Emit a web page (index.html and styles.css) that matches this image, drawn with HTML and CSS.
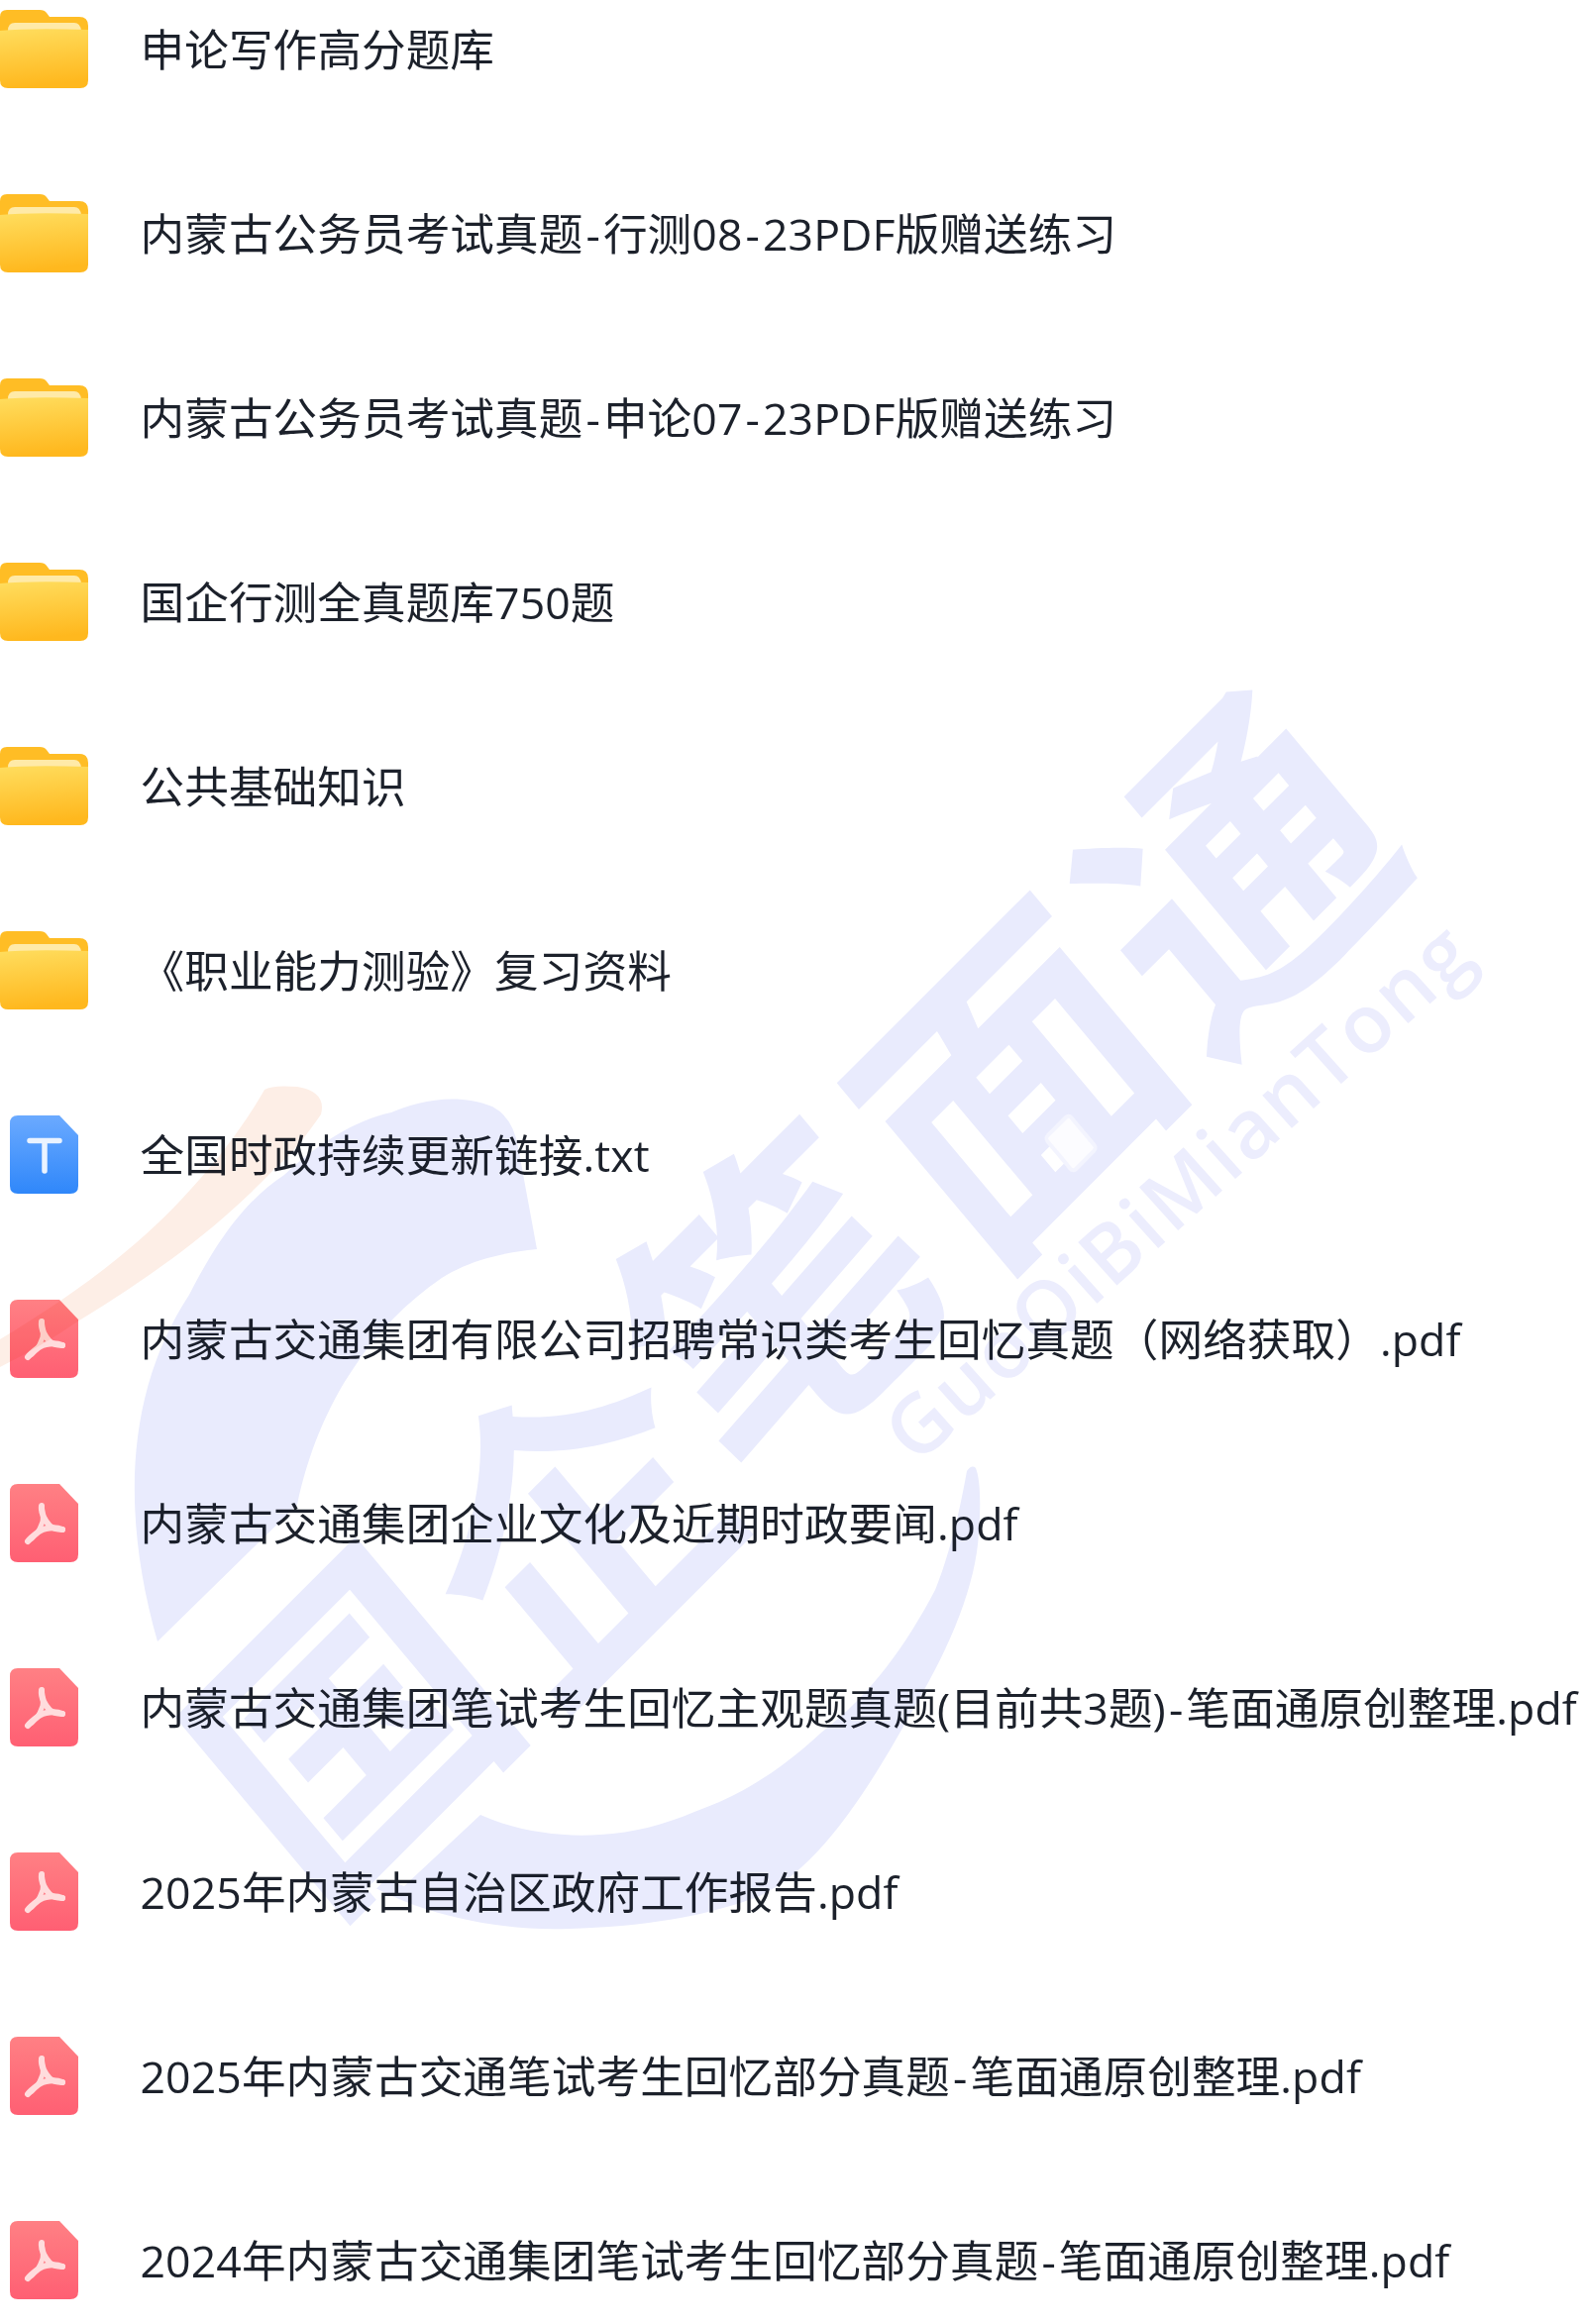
FILE: index.html
```html
<!DOCTYPE html>
<html lang="zh-CN">
<head>
<meta charset="utf-8">
<title>文件列表</title>
<link rel="stylesheet" href="styles.css">
</head>
<body>
<svg width="0" height="0" class="defs">
  <defs>
    <linearGradient id="gf" x1="0" y1="0" x2="0.15" y2="1"><stop offset="0" stop-color="#ffdd5e"/><stop offset="1" stop-color="#ffb81e"/></linearGradient>
    <linearGradient id="gb" x1="0" y1="0" x2="0" y2="1"><stop offset="0" stop-color="#6baaff"/><stop offset="1" stop-color="#2f87fa"/></linearGradient>
    <linearGradient id="gr" x1="0" y1="0" x2="0" y2="1"><stop offset="0" stop-color="#ff8084"/><stop offset="1" stop-color="#ff5f73"/></linearGradient>
    <symbol id="folder" viewBox="0 0 90 80">
      <path d="M0 7Q0 0 7 0H40Q45 0 47 3L50 7H80Q89 7 89 16V40H0Z" fill="#ffbd25"/>
      <path d="M8 21Q8 13 15 13H75Q81 13 82 21V32H8Z" fill="#ffeaa8"/>
      <path d="M0 21Q30 18 89 20V71Q89 79 81 79H8Q0 79 0 71Z" fill="url(#gf)"/>
    </symbol>
    <symbol id="txt" viewBox="0 0 69 79">
      <path d="M8 0H50L69 20V71Q69 79 61 79H8Q0 79 0 71V8Q0 0 8 0Z" fill="url(#gb)"/>
      <path d="M20 25.500H50M35 25.500V56" fill="none" stroke="#eaf3ff" stroke-width="5.500" stroke-linecap="round"/>
    </symbol>
    <symbol id="pdf" viewBox="0 0 69 79">
      <path d="M8 0H50L69 20V71Q69 79 61 79H8Q0 79 0 71V8Q0 0 8 0Z" fill="url(#gr)"/>
      <g fill="none" stroke="#ffdcdd" stroke-linecap="round" stroke-linejoin="round">
        <path d="M32 22C31 30 36 38 40 42C44 46 49 46 53 46" stroke-width="6"/>
        <path d="M53 46C46 43 34 44 28 49C24 52 20 55 18 58" stroke-width="6"/>
        <path d="M18 58C24 55 30 47 33 38C34 32 33 27 32 22" stroke-width="5"/>
      </g>
    </symbol>
  </defs>
</svg>

<ul class="files">
  <li class="file"><svg class="ic-folder"><use href="#folder"/></svg><span class="name">申论写作高分题库</span></li>
  <li class="file"><svg class="ic-folder"><use href="#folder"/></svg><span class="name">内蒙古公务员考试真题<span class="hy">-</span>行测08<span class="hy">-</span>23PDF版赠送练习</span></li>
  <li class="file"><svg class="ic-folder"><use href="#folder"/></svg><span class="name">内蒙古公务员考试真题<span class="hy">-</span>申论07<span class="hy">-</span>23PDF版赠送练习</span></li>
  <li class="file"><svg class="ic-folder"><use href="#folder"/></svg><span class="name">国企行测全真题库750题</span></li>
  <li class="file"><svg class="ic-folder"><use href="#folder"/></svg><span class="name">公共基础知识</span></li>
  <li class="file"><svg class="ic-folder"><use href="#folder"/></svg><span class="name">《职业能力测验》复习资料</span></li>
  <li class="file"><svg class="ic-doc"><use href="#txt"/></svg><span class="name">全国时政持续更新链接.txt</span></li>
  <li class="file"><svg class="ic-doc"><use href="#pdf"/></svg><span class="name">内蒙古交通集团有限公司招聘常识类考生回忆真题（网络获取）.pdf</span></li>
  <li class="file"><svg class="ic-doc"><use href="#pdf"/></svg><span class="name">内蒙古交通集团企业文化及近期时政要闻.pdf</span></li>
  <li class="file"><svg class="ic-doc"><use href="#pdf"/></svg><span class="name">内蒙古交通集团笔试考生回忆主观题真题(目前共3题)<span class="hy">-</span>笔面通原创整理.pdf</span></li>
  <li class="file"><svg class="ic-doc"><use href="#pdf"/></svg><span class="name">2025年内蒙古自治区政府工作报告.pdf</span></li>
  <li class="file"><svg class="ic-doc"><use href="#pdf"/></svg><span class="name">2025年内蒙古交通笔试考生回忆部分真题<span class="hy">-</span>笔面通原创整理.pdf</span></li>
  <li class="file"><svg class="ic-doc"><use href="#pdf"/></svg><span class="name">2024年内蒙古交通集团笔试考生回忆部分真题<span class="hy">-</span>笔面通原创整理.pdf</span></li>
</ul>

<svg class="watermark" viewBox="0 0 1600 2346" aria-hidden="true">
  <path class="wm-orange" d="M0 1352C70 1310 140 1260 193 1200C225 1165 250 1130 267 1100Q275 1095 300 1097Q330 1102 324 1125C310 1145 295 1165 277 1180C215 1245 150 1290 80 1333C55 1350 30 1365 0 1380Z"/>
  <path class="wm-blue" d="M159 1657C120 1520 130 1400 191 1307C220 1250 250 1210 287 1186C320 1155 360 1130 395 1123C420 1112 460 1102 497 1117Q518 1128 523 1158L542 1261C500 1265 470 1275 446 1290C410 1315 380 1345 357 1381C330 1420 310 1470 300 1519Z"/>
  <path class="wm-blue" d="M485 1832L408 1904L340 1880C400 1930 500 1950 574 1947C650 1945 710 1935 765 1915C830 1885 880 1800 925 1720C960 1660 985 1600 988 1548C990 1520 990 1495 985 1482Q981 1478 976 1485C968 1530 958 1570 944 1605C915 1660 880 1710 829 1749C790 1785 750 1812 701 1829C670 1842 640 1850 606 1852C565 1855 520 1848 485 1832Z"/>
  <g class="wm-logo">
    <text transform="translate(342 1730) rotate(-45) skewX(-5)">国</text>
    <text transform="translate(570 1525) rotate(-45) skewX(-5)">企</text>
    <text transform="translate(775 1300) rotate(-45) skewX(-5)">笔</text>
    <text transform="translate(1012 1080) rotate(-45) skewX(-5)">面</text>
    <text transform="translate(1238 866) rotate(-45) skewX(-5)">通</text>
  </g>
  <rect class="wm-diamond" x="-17" y="-22" width="34" height="44" rx="4" transform="translate(1081 1154) rotate(-45) skewX(-5)"/>
  <text class="wm-latin" transform="translate(925 1480) rotate(-42)" textLength="762">GuoQiBiMianTong</text>
</svg>
</body>
</html>
```

FILE: styles.css
```css
html, body {
  margin: 0;
  padding: 0;
  background: #ffffff;
}

body {
  position: relative;
  width: 1600px;
  height: 2346px;
  overflow: hidden;
  font-family: "Open Sans", "Noto Sans CJK SC", sans-serif;
}

.defs {
  position: absolute;
}

.files {
  list-style: none;
  margin: 0;
  padding: 0;
  display: flex;
  flex-direction: column;
  gap: 87px;
  filter: blur(0.45px);
}

.file {
  height: 99px;
  display: flex;
  align-items: center;
}

.ic-folder {
  width: 90px;
  height: 80px;
  margin-right: 51.5px;
  flex: none;
}

.ic-doc {
  width: 69px;
  height: 79px;
  margin-left: 10px;
  margin-right: 62.5px;
  flex: none;
}

.name {
  font-size: 44.6px;
  line-height: 60px;
  letter-spacing: 0.1px;
  color: #1c212b;
  white-space: nowrap;
}

.hy {
  margin: 0 3px;
}

.watermark {
  position: absolute;
  left: 0;
  top: 0;
  width: 1600px;
  height: 2346px;
  pointer-events: none;
  mix-blend-mode: multiply;
}

.wm-orange {
  fill: #fdeee6;
}

.wm-blue {
  fill: #e9ebfd;
}

.wm-logo text {
  font-family: "Noto Sans CJK SC", sans-serif;
  font-weight: 700;
  font-size: 305px;
  fill: #e9ebfd;
  stroke: #ffffff;
  stroke-width: 14px;
  paint-order: stroke;
  text-anchor: middle;
  dominant-baseline: central;
}

.wm-diamond {
  fill: #fcfcff;
  stroke: #f3f4fe;
  stroke-width: 4px;
}

.wm-latin {
  font-family: "Open Sans", sans-serif;
  font-weight: 600;
  font-size: 82px;
  fill: #ecedfd;
}
```
